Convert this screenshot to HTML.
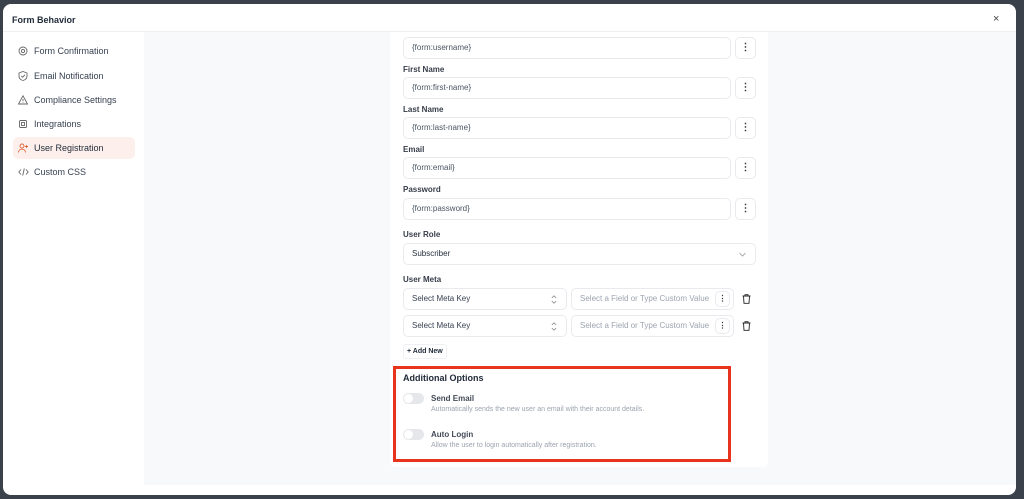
<!DOCTYPE html><html><head><style>
*{box-sizing:border-box;margin:0;padding:0}
body{width:1024px;height:499px;background:#3b414b;font-family:"Liberation Sans",sans-serif;position:relative;overflow:hidden;color:#1f2937}
.a{position:absolute}
.modal{left:3px;top:4px;width:1013px;height:491px;background:#fff;border-radius:8px;overflow:hidden}
.inp{position:absolute;height:22px;border:1px solid #e8eaee;border-radius:5px;background:#fff;font-size:8px;color:#4b5563;padding-left:8px;line-height:20px}
.kb{position:absolute;width:21px;height:22px;border:1px solid #e8eaee;border-radius:5px;background:#fff;font-size:10px;font-weight:bold;text-align:center;line-height:20px;color:#333}
.lbl{position:absolute;font-size:8px;color:#111827;font-weight:bold;opacity:.85}
.nav{position:absolute;left:10px;width:122px;height:22px;font-size:9px;color:#374151;line-height:22px;padding-left:21px;border-radius:5px}
.nav svg{position:absolute;left:5px;top:6px}
.tg{position:absolute;width:21px;height:11px;border-radius:6px;background:#e5e7eb}
.tg::after{content:"";position:absolute;left:1px;top:1px;width:9px;height:9px;border-radius:50%;background:#fff}
.tr{position:absolute;left:742px}
</style></head><body>
<div class="a modal">
 <div class="a" style="left:9px;top:11px;font-size:9px;font-weight:bold">Form Behavior</div>
 <div class="a" style="left:990px;top:9px;font-size:11px;color:#444">×</div>
 <div class="a" style="left:0;top:27px;width:1013px;height:1px;background:#eef0f3"></div>
 <div class="a" style="left:141px;top:28px;width:872px;height:453px;background:#f7f9fb"></div>
 <div class="nav" style="top:36px"><svg width="10" height="10" viewBox="0 0 10 10" fill="none" stroke="#666" stroke-width=".9"><circle cx="5" cy="5" r="1.6"/><circle cx="5" cy="5" r="4"/></svg>Form Confirmation</div>
 <div class="nav" style="top:61px"><svg width="10" height="10" viewBox="0 0 10 10" fill="none" stroke="#666" stroke-width=".9"><path d="M5 .5L9 2v3c0 2.5-2 4-4 4.5C3 9 1 7.5 1 5V2z M3.3 5l1.3 1.2L7 3.8"/></svg>Email Notification</div>
 <div class="nav" style="top:85px"><svg width="10" height="10" viewBox="0 0 10 10" fill="none" stroke="#666" stroke-width=".9"><path d="M5 .8L9.5 9H.5z M5 4v2.3 M5 7.3v.5"/></svg>Compliance Settings</div>
 <div class="nav" style="top:109px"><svg width="10" height="10" viewBox="0 0 10 10" fill="none" stroke="#666" stroke-width=".9"><rect x="1.5" y="1.5" width="7" height="7" rx="1"/><rect x="3.5" y="3.5" width="3" height="3"/></svg>Integrations</div>
 <div class="nav" style="top:133px;background:#fdf0ec;color:#1f2937"><svg width="11" height="10" viewBox="0 0 11 10" fill="none" stroke="#e0643a" stroke-width=".9"><circle cx="4" cy="3" r="2"/><path d="M.5 9.5c0-2 1.5-3.3 3.5-3.3s3.5 1.3 3.5 3.3 M8.5 2v3 M7 3.5h3"/></svg>User Registration</div>
 <div class="nav" style="top:157px"><svg width="11" height="10" viewBox="0 0 11 10" fill="none" stroke="#666" stroke-width=".9"><path d="M3 2.5L.8 5 3 7.5 M8 2.5L10.2 5 8 7.5 M6.3 1.5L4.7 8.5"/></svg>Custom CSS</div>
 <div class="a" style="left:387px;top:28px;width:378px;height:435px;background:#fff;border-radius:0 0 6px 6px"></div>
</div>
<div class="inp" style="left:403px;top:37px;width:328px">{form:username}</div><div class="kb" style="left:735px;top:37px">⋮</div>
<div class="lbl" style="left:403px;top:65px">First Name</div>
<div class="inp" style="left:403px;top:77px;width:328px">{form:first-name}</div><div class="kb" style="left:735px;top:77px">⋮</div>
<div class="lbl" style="left:403px;top:105px">Last Name</div>
<div class="inp" style="left:403px;top:117px;width:328px">{form:last-name}</div><div class="kb" style="left:735px;top:117px">⋮</div>
<div class="lbl" style="left:403px;top:145px">Email</div>
<div class="inp" style="left:403px;top:157px;width:328px">{form:email}</div><div class="kb" style="left:735px;top:157px">⋮</div>
<div class="lbl" style="left:403px;top:185px">Password</div>
<div class="inp" style="left:403px;top:198px;width:328px">{form:password}</div><div class="kb" style="left:735px;top:198px">⋮</div>
<div class="lbl" style="left:403px;top:230px">User Role</div>
<div class="inp" style="left:403px;top:243px;width:353px;color:#1f2937">Subscriber<svg class="a" style="right:9px;top:8px" width="7" height="5" viewBox="0 0 7 5" fill="none" stroke="#999" stroke-width=".8"><path d="M.5 1l3 3 3-3"/></svg></div>
<div class="lbl" style="left:403px;top:275px">User Meta</div>
<div class="inp" style="left:403px;top:288px;width:164px;color:#374151">Select Meta Key<svg class="a" style="right:9px;top:6px" width="6" height="9" viewBox="0 0 6 9" fill="none" stroke="#888" stroke-width=".8"><path d="M.8 3L3 .8 5.2 3 M.8 6L3 8.2 5.2 6"/></svg></div>
<div class="inp" style="left:571px;top:288px;width:163px;color:#9ca3af">Select a Field or Type Custom Value<div class="kb" style="left:143px;top:2px;width:15px;height:16px;line-height:14px;font-size:8px">⋮</div></div>
<svg class="tr" style="top:294px" width="9" height="10" viewBox="0 0 9 10" fill="none" stroke="#222" stroke-width=".9"><path d="M.5 2h8 M3 2V.7h3V2 M1.5 2l.5 7.3h5l.5-7.3"/></svg>
<div class="inp" style="left:403px;top:315px;width:164px;color:#374151">Select Meta Key<svg class="a" style="right:9px;top:6px" width="6" height="9" viewBox="0 0 6 9" fill="none" stroke="#888" stroke-width=".8"><path d="M.8 3L3 .8 5.2 3 M.8 6L3 8.2 5.2 6"/></svg></div>
<div class="inp" style="left:571px;top:315px;width:163px;color:#9ca3af">Select a Field or Type Custom Value<div class="kb" style="left:143px;top:2px;width:15px;height:16px;line-height:14px;font-size:8px">⋮</div></div>
<svg class="tr" style="top:321px" width="9" height="10" viewBox="0 0 9 10" fill="none" stroke="#222" stroke-width=".9"><path d="M.5 2h8 M3 2V.7h3V2 M1.5 2l.5 7.3h5l.5-7.3"/></svg>
<div class="a" style="left:403px;top:344px;width:44px;height:15px;border:1px solid #eef0f3;border-radius:3px;font-size:7px;font-weight:bold;line-height:13px;padding-left:3px">+ Add New</div>
<div class="a" style="left:393px;top:366px;width:338px;height:96px;border:3px solid #e8341c"></div>
<div class="a" style="left:403px;top:373px;font-size:9px;font-weight:bold">Additional Options</div>
<div class="tg" style="left:403px;top:393px"></div>
<div class="a" style="left:431px;top:394px;font-size:8px;font-weight:bold;opacity:.85">Send Email</div>
<div class="a" style="left:431px;top:406px;font-size:7px;color:#9ca3af">Automatically sends the new user an email with their account details.</div>
<div class="tg" style="left:403px;top:429px"></div>
<div class="a" style="left:431px;top:430px;font-size:8px;font-weight:bold;opacity:.85">Auto Login</div>
<div class="a" style="left:431px;top:442px;font-size:7px;color:#9ca3af">Allow the user to login automatically after registration.</div>
</body></html>
